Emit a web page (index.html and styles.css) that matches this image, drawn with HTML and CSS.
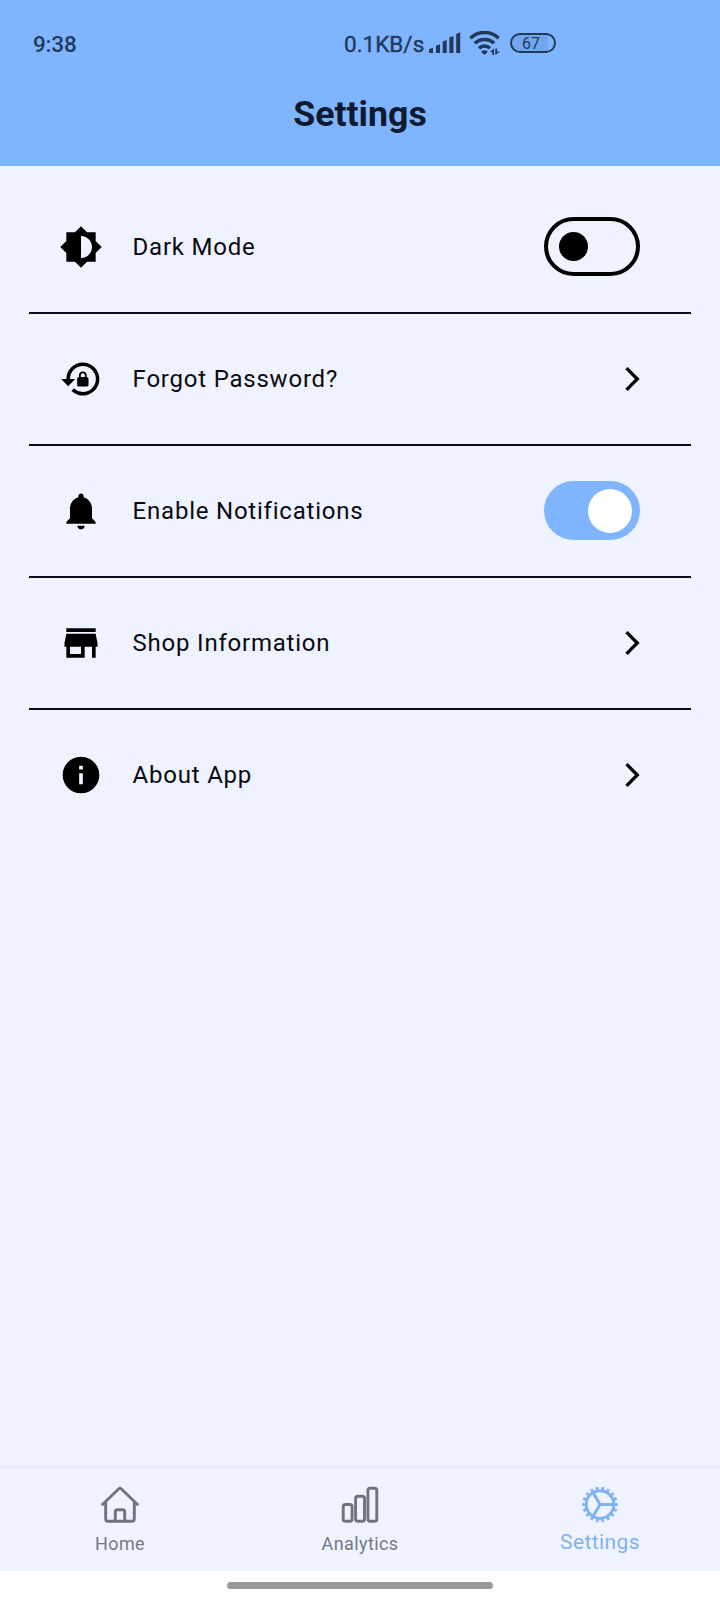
FILE: index.html
```html
<!DOCTYPE html>
<html lang="en">
<head>
<meta charset="utf-8">
<title>Settings</title>
<link rel="stylesheet" href="styles.css">
</head>
<body>
<div class="screen">
  <header class="header">
    <div class="status">
      <span class="clock">9:38</span>
      <span class="speed">0.1KB/s</span>
      <svg class="signal" width="34" height="22" viewBox="0 0 34 22"><path d="M1 18q0-1 1-1.300L5 15.700v5.300H1zM8 13.700l4-1.400V21H8zM14.700 9.500l4-1.400V21h-4zM21.400 5.500l4-1.400V21h-4zM28.200 2l4-1.700V21h-4z"/></svg>
      <svg class="wifi" width="32" height="25" viewBox="0 0 32 25"><g fill="none" stroke="#22395a" stroke-width="3.500"><path d="M1.300 7.200a20.500 20.500 0 0 1 28.400 0"/><path d="M5.800 12.300a14 14 0 0 1 19.400 0"/><path d="M10 17.200a8 8 0 0 1 11 0"/></g><path d="M12.300 20.300q3.200-2 6.400 0-.5 2-3.200 3.500-2.700-1.500-3.200-3.500zM21 21l4-3.500V24h-1.800v-3zM26.300 17.500h1.800V20.500h3L26.300 24z"/></svg>
      <span class="battery">67</span>
    </div>
    <h1 class="title">Settings</h1>
  </header>

  <main class="list">
    <div class="row">
      <svg class="icon" viewBox="0 0 24 24"><path d="M20 15.310L23.310 12 20 8.690V4h-4.690L12 .69 8.690 4H4v4.690L.69 12 4 15.310V20h4.690L12 23.310 15.310 20H20v-4.690zM12 18V6c3.310 0 6 2.690 6 6s-2.690 6-6 6z"/></svg>
      <span class="label">Dark Mode</span>
      <span class="switch"><span class="thumb"></span></span>
    </div>
    <div class="row">
      <svg class="icon" viewBox="0 0 24 24"><path d="M13 3a9 9 0 0 0-8.950 9H1.200L5 16 8.800 12H6a7.050 7.050 0 1 1 7 7.050c-1.900 0-3.600-.7-4.850-1.950L6.800 18.500A9 9 0 1 0 13 3z"/><path fill-rule="evenodd" d="M15.100 10.900V10a2.100 2.100 0 0 0-4.200 0v.9q-1 .1-1 1v3.200q0 1 1 1h4.200q1 0 1-1v-3.200q0-.9-1-1zm-3.200 0V10a1.100 1.100 0 0 1 2.200 0v.9z"/></svg>
      <span class="label">Forgot Password?</span>
      <svg class="chevron" viewBox="0 0 16 26"><path d="M2.500 2.200L13.300 13 2.500 23.800"/></svg>
    </div>
    <div class="row">
      <svg class="icon" viewBox="0 0 24 24"><path d="M12 22c1.100 0 2-.9 2-2h-4c0 1.100.9 2 2 2zm6-6v-5c0-3.070-1.630-5.640-4.500-6.320V4c0-.83-.67-1.500-1.500-1.500s-1.500.67-1.500 1.500v.68C7.640 5.360 6 7.920 6 11v5l-2 2v1h16v-1l-2-2z"/></svg>
      <span class="label">Enable Notifications</span>
      <span class="switch on"><span class="thumb"></span></span>
    </div>
    <div class="row">
      <svg class="icon" viewBox="0 0 24 24"><path d="M20 4H4v2h16V4zm1 10v-2l-1-5H4l-1 5v2h1v6h10v-6h4v6h2v-6h1zm-9 4H6v-4h6v4z"/></svg>
      <span class="label">Shop Information</span>
      <svg class="chevron" viewBox="0 0 16 26"><path d="M2.500 2.200L13.300 13 2.500 23.800"/></svg>
    </div>
    <div class="row">
      <svg class="icon" viewBox="0 0 24 24"><path d="M12 2C6.480 2 2 6.480 2 12s4.480 10 10 10 10-4.480 10-10S17.520 2 12 2zm1 15h-2v-6h2v6zm0-8h-2V7h2v2z"/></svg>
      <span class="label">About App</span>
      <svg class="chevron" viewBox="0 0 16 26"><path d="M2.500 2.200L13.300 13 2.500 23.800"/></svg>
    </div>
  </main>

  <nav class="tabs">
    <div class="tab">
      <svg class="tab-icon" viewBox="0 0 44 44"><path d="M3.700 23.300L20.800 6.800q1.200-1 2.400 0L40.300 23.300M7.700 20V37q0 2.300 2.300 2.300h24q2.300 0 2.300-2.300V20M17.300 39V29.700q0-2 2-2h5.400q2 0 2 2v9.300"/></svg>
      <span>Home</span>
    </div>
    <div class="tab">
      <svg class="tab-icon" viewBox="0 0 44 44"><rect x="5.200" y="22.500" width="8.900" height="16.800" rx="2.300"/><rect x="17.600" y="14.300" width="8.900" height="25" rx="2.300"/><rect x="29.900" y="6.300" width="8.900" height="33" rx="2.300"/></svg>
      <span>Analytics</span>
    </div>
    <div class="tab active">
      <svg class="tab-icon" viewBox="0 0 44 44"><circle cx="22" cy="22.500" r="13.800"/><circle cx="22" cy="22.500" r="16" pathLength="180" stroke-width="3.500" stroke-dasharray="5 5" stroke-dashoffset="2.500"/><path d="M22 22.500h13.500M22 22.500L15.250 10.800M22 22.500L15.250 34.200"/></svg>
      <span>Settings</span>
    </div>
  </nav>
  <footer class="gesture"><span class="pill"></span></footer>
</div>
</body>
</html>
```
FILE: styles.css
```css
* { box-sizing: border-box; }
body {
  margin: 0;
  background: #eff3ff;
  font-family: Roboto, "Liberation Sans", sans-serif;
}
.screen {
  display: flex;
  flex-direction: column;
  width: 720px;
  height: 1600px;
}
.header {
  height: 166px;
  flex: none;
  background: #7fb5ff;
}
.status {
  display: flex;
  align-items: center;
  height: 86px;
  padding-left: 33px;
  font-size: 22.5px;
  font-weight: 500;
  line-height: 28px;
  color: #22395a;
  fill: #22395a;
}
.clock { width: 311px; padding-top: 1px; letter-spacing: -0.2px; }
.speed {
  width: 84px;
  padding-top: 1px;
  font-weight: 400;
  -webkit-text-stroke: 0.4px #22395a;
}
.signal { margin-right: 7px; }
.wifi { margin-right: 9px; }
.battery {
  width: 46px;
  height: 20px;
  border: 2px solid #22395a;
  border-radius: 10px;
  padding-right: 4px;
  background: linear-gradient(90deg, #72a6ef 85%, transparent 85%);
  font-size: 16px;
  font-weight: 400;
  line-height: 17px;
  text-align: center;
}
.title {
  margin: 5px 0 0;
  font-size: 35.7px;
  font-weight: 700;
  line-height: 46px;
  text-align: center;
  color: #0f1930;
}
.list {
  flex: 1;
  padding: 15.700px 29px 0;
}
.row {
  display: flex;
  align-items: center;
  height: 132px;
  padding: 0 51px 0 29.6px;
  border-bottom: 2px solid #0c0c14;
}
.row:last-child { border-bottom-color: transparent; }
.icon {
  width: 44px;
  height: 44px;
  margin-right: 30px;
}
.label {
  flex: 1;
  padding-top: 1px;
  font-size: 24px;
  letter-spacing: 0.78px;
  line-height: 32px;
  color: #0a0a10;
}
.chevron {
  width: 16px;
  height: 26px;
  margin-right: 0.3px;
  fill: none;
  stroke: #000;
  stroke-width: 3.3px;
}
.switch {
  display: flex;
  align-items: center;
  width: 95.5px;
  height: 58.7px;
  margin-right: 0.5px;
  padding-left: 11px;
  border: 4px solid #000;
  border-radius: 30px;
}
.thumb {
  width: 29px;
  height: 29px;
  border-radius: 50%;
  background: #000;
}
.switch.on {
  padding-left: 40px;
  border-color: #7fb5ff;
  background: #7fb5ff;
}
.switch.on .thumb {
  width: 44px;
  height: 44px;
  flex: none;
  background: #fff;
}
.tabs {
  display: flex;
  height: 105px;
  flex: none;
  border-top: 2px solid #e6eaf5;
  padding-top: 14px;
}
.tab {
  display: flex;
  flex: 1;
  flex-direction: column;
  align-items: center;
  font-size: 18px;
  letter-spacing: 0.4px;
  line-height: 35px;
  color: #737884;
}
.tab-icon {
  width: 44px;
  height: 44px;
  flex: none;
  fill: none;
  stroke: #70737e;
  stroke-width: 2.9px;
}
.tab.active {
  font-size: 21px;
  line-height: 32px;
  color: #80b2f0;
}
.active .tab-icon { stroke: #80b2f0; }
.gesture {
  display: flex;
  justify-content: center;
  height: 29px;
  flex: none;
  padding-top: 11px;
  background: #fff;
}
.pill {
  width: 266px;
  height: 7px;
  border-radius: 4px;
  background: #999;
}
```
